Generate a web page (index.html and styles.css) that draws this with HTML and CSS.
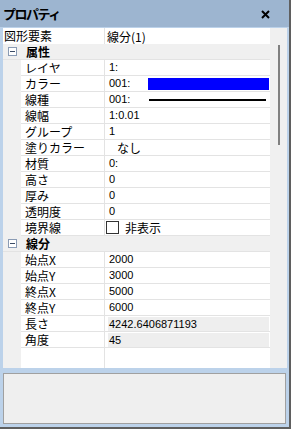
FILE: index.html
```html
<!DOCTYPE html>
<html lang="ja">
<head>
    <meta charset="UTF-8">
    <title>プロパティ</title>
    <link rel="stylesheet" href="styles.css">
</head>
<body>
    <div class="panel">
        <div class="titlebar">
            <span class="title">プロパティ</span>
            <svg class="close" width="9" height="9" viewBox="0 0 9 9"><path d="M1 1 L8 8 M8 1 L1 8" stroke="#000" stroke-width="2"/></svg>
        </div>
        <div class="frame">
            <div class="grid-area">
                <div class="grid">
                    <div class="row top">
                        <div class="name wide">図形要素</div>
                        <div class="value">線分(1)</div>
                    </div>
                    <div class="row cat">
                        <span class="toggle"></span><span class="cat-name">属性</span>
                    </div>
                    <div class="row"><div class="gutter"></div><div class="name">レイヤ</div><div class="value num">1:</div></div>
                    <div class="row"><div class="gutter"></div><div class="name">カラー</div><div class="value num">001:<span class="swatch"></span></div></div>
                    <div class="row"><div class="gutter"></div><div class="name">線種</div><div class="value num">001:<span class="line-sample"></span></div></div>
                    <div class="row"><div class="gutter"></div><div class="name">線幅</div><div class="value num">1:0.01</div></div>
                    <div class="row"><div class="gutter"></div><div class="name">グループ</div><div class="value num">1</div></div>
                    <div class="row"><div class="gutter"></div><div class="name">塗りカラー</div><div class="value indent">なし</div></div>
                    <div class="row"><div class="gutter"></div><div class="name">材質</div><div class="value num">0:</div></div>
                    <div class="row"><div class="gutter"></div><div class="name">高さ</div><div class="value num">0</div></div>
                    <div class="row"><div class="gutter"></div><div class="name">厚み</div><div class="value num">0</div></div>
                    <div class="row"><div class="gutter"></div><div class="name">透明度</div><div class="value num">0</div></div>
                    <div class="row"><div class="gutter"></div><div class="name">境界線</div><div class="value box"><span class="check"></span>非表示</div></div>
                    <div class="row cat">
                        <span class="toggle"></span><span class="cat-name">線分</span>
                    </div>
                    <div class="row"><div class="gutter"></div><div class="name">始点X</div><div class="value num">2000</div></div>
                    <div class="row"><div class="gutter"></div><div class="name">始点Y</div><div class="value num">3000</div></div>
                    <div class="row"><div class="gutter"></div><div class="name">終点X</div><div class="value num">5000</div></div>
                    <div class="row"><div class="gutter"></div><div class="name">終点Y</div><div class="value num">6000</div></div>
                    <div class="row"><div class="gutter"></div><div class="name">長さ</div><div class="value num readonly"><span>4242.6406871193</span></div></div>
                    <div class="row"><div class="gutter"></div><div class="name">角度</div><div class="value num readonly"><span>45</span></div></div>
                    <div class="row filler"><div class="gutter"></div><div class="name"></div><div class="value"></div></div>
                </div>
                <div class="scrollbar"><div class="thumb"></div></div>
            </div>
            <div class="desc"></div>
        </div>
    </div>
</body>
</html>
```

FILE: styles.css
```css
body {
    margin: 0;
    background: #ffffff;
    font-family: "Noto Sans CJK JP", "Liberation Sans", sans-serif;
    font-size: 12px;
    color: #000000;
}
.panel {
    width: 289px;
    height: 427px;
    border-right: 2px solid #5f5f5f;
    border-bottom: 2px solid #5f5f5f;
    display: flex;
    flex-direction: column;
    background: #bcd2ea;
}
.titlebar {
    height: 27px;
    background: #9db5d0;
    display: flex;
    align-items: center;
    justify-content: space-between;
    padding: 0 19px 0 3px;
    flex-shrink: 0;
}
.title {
    font-weight: bold;
    font-size: 13px;
    letter-spacing: -1.5px;
}
.close { display: block; margin-top: 2px; }
.frame {
    flex: 1;
    display: flex;
    flex-direction: column;
    padding: 1px 2px 3px 3px;
}
.grid-area {
    height: 340px;
    display: flex;
    background: #ffffff;
}
.grid {
    width: 267px;
    display: flex;
    flex-direction: column;
}
.row {
    display: flex;
    height: 16px;
    line-height: 15px;
}
.gutter {
    width: 18px;
    background: #f0f0f0;
    flex-shrink: 0;
}
.name {
    width: 79px;
    padding-left: 4px;
    border-bottom: 1px solid #e3e3e3;
    border-right: 1px solid #e3e3e3;
    white-space: nowrap;
    overflow: hidden;
    flex-shrink: 0;
}
.name.wide {
    width: 100px;
    padding-left: 1px;
    border-bottom: none;
}
.value {
    flex: 1;
    padding-left: 3px;
    border-bottom: 1px solid #e3e3e3;
    display: flex;
    align-items: center;
    white-space: nowrap;
    overflow: hidden;
}
.row.top .value { border-bottom: none; padding-left: 2px; }
.value.num {
    font-family: "Liberation Sans", sans-serif;
    font-size: 11px;
    padding-left: 4px;
}
.value.indent { padding-left: 12px; }
.value.box { padding-left: 1px; }
.row.cat {
    background: #f0f0f0;
    align-items: center;
    border-bottom: 1px solid #e3e3e3;
    box-sizing: border-box;
}
.toggle {
    width: 7px;
    height: 7px;
    border: 1px solid #8a9bb4;
    background: #ffffff;
    margin: 0 9px 0 5px;
    position: relative;
}
.toggle::after {
    content: "";
    position: absolute;
    left: 1px;
    top: 3px;
    width: 5px;
    height: 1px;
    background: #3b4c66;
}
.cat-name {
    font-weight: bold;
    font-size: 12px;
}
.swatch {
    width: 121px;
    height: 12px;
    background: #0000ff;
    margin-left: auto;
    margin-right: 1px;
}
.line-sample {
    width: 117px;
    height: 2px;
    background: #000000;
    margin-left: auto;
    margin-right: 4px;
}
.check {
    width: 11px;
    height: 11px;
    border: 1px solid #333333;
    background: #ffffff;
    margin-right: 6px;
}
.value.readonly {
    padding: 1px 1px 1px 3px;
}
.value.readonly span {
    flex: 1;
    background: #eeeeee;
    height: 14px;
    line-height: 14px;
    padding-left: 1px;
}
.row.filler {
    flex: 1;
    height: auto;
}
.row.filler .name, .row.filler .value { border-bottom: none; }
.scrollbar {
    width: 17px;
    background: #f0f0f0;
    position: relative;
}
.thumb {
    position: absolute;
    left: 8px;
    top: 17px;
    width: 2px;
    height: 100px;
    background: #808080;
}
.desc {
    margin-top: 5px;
    flex: 1;
    border: 1px solid #a0a0a0;
    background: #efefef;
    margin-right: 1px;
}
```
